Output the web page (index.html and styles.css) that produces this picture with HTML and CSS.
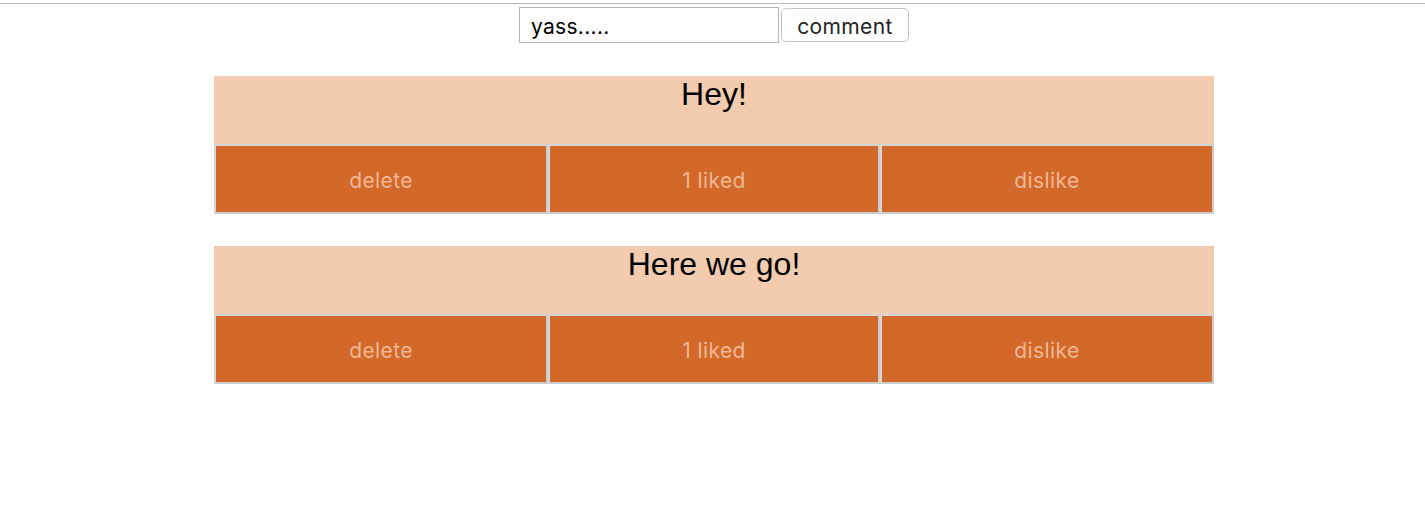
FILE: index.html
```html
<!DOCTYPE html>
<html>
<head>
<meta charset="utf-8">
<link rel="stylesheet" href="styles.css">
</head>
<body>
<div class="topline"></div>
<div class="page">
  <form class="composer">
    <input class="composer-input" type="text" value="yass.....">
    <button class="composer-btn" type="button">comment</button>
  </form>
  <div class="list">
    <div class="card">
      <div class="card-title">Hey!</div>
      <div class="card-actions">
        <button class="action" type="button">delete</button>
        <button class="action" type="button">1 liked</button>
        <button class="action" type="button">dislike</button>
      </div>
    </div>
    <div class="card">
      <div class="card-title">Here we go!</div>
      <div class="card-actions">
        <button class="action" type="button">delete</button>
        <button class="action" type="button">1 liked</button>
        <button class="action" type="button">dislike</button>
      </div>
    </div>
  </div>
</div>
</body>
</html>
```
FILE: styles.css
```css
html, body {
  margin: 0;
  padding: 0;
  background: #ffffff;
}
.topline {
  margin-top: 3px;
  height: 1px;
  background: #b9b9b9;
}
.page {
  padding-left: 3px;
  font-family: "Liberation Sans", Arial, sans-serif;
}
.composer {
  display: flex;
  justify-content: center;
  align-items: flex-start;
  gap: 2px;
  margin: 3px 0 0;
}
.composer-input {
  box-sizing: border-box;
  width: 260px;
  height: 36px;
  margin: 0;
  padding: 2px 11px 0;
  border: 1px solid #b5b5b5;
  font-family: Inter, "Liberation Sans", sans-serif;
  font-size: 21px;
  letter-spacing: 0.3px;
  color: #000;
  outline: none;
}
.composer-btn {
  box-sizing: border-box;
  width: 128px;
  height: 34px;
  margin: 1px 0 0;
  padding: 2px 0 0;
  border: 1px solid #c4c4c4;
  border-radius: 5px;
  background: #fff;
  font-family: Inter, "Liberation Sans", sans-serif;
  font-size: 21px;
  letter-spacing: 0.4px;
  color: #222;
}
.list {
  width: 1000px;
  margin: 33px auto 0;
  display: flex;
  flex-direction: column;
  gap: 32px;
}
.card {
  background: #f3cbae;
}
.card-title {
  height: 68px;
  text-align: center;
  font-size: 32px;
  line-height: 37px;
  color: #000;
}
.card-actions {
  display: grid;
  grid-template-columns: 334px 332px 334px;
}
.action {
  box-sizing: border-box;
  height: 70px;
  margin: 0;
  border: 2px solid #cccccc;
  border-top-color: #d6d6d6;
  border-left-color: #d6d6d6;
  background: #d2692a;
  color: #f2b793;
  font-family: Inter, "Liberation Sans", sans-serif;
  font-size: 21px;
  letter-spacing: 0.4px;
  padding: 2px 0 0;
}
```
